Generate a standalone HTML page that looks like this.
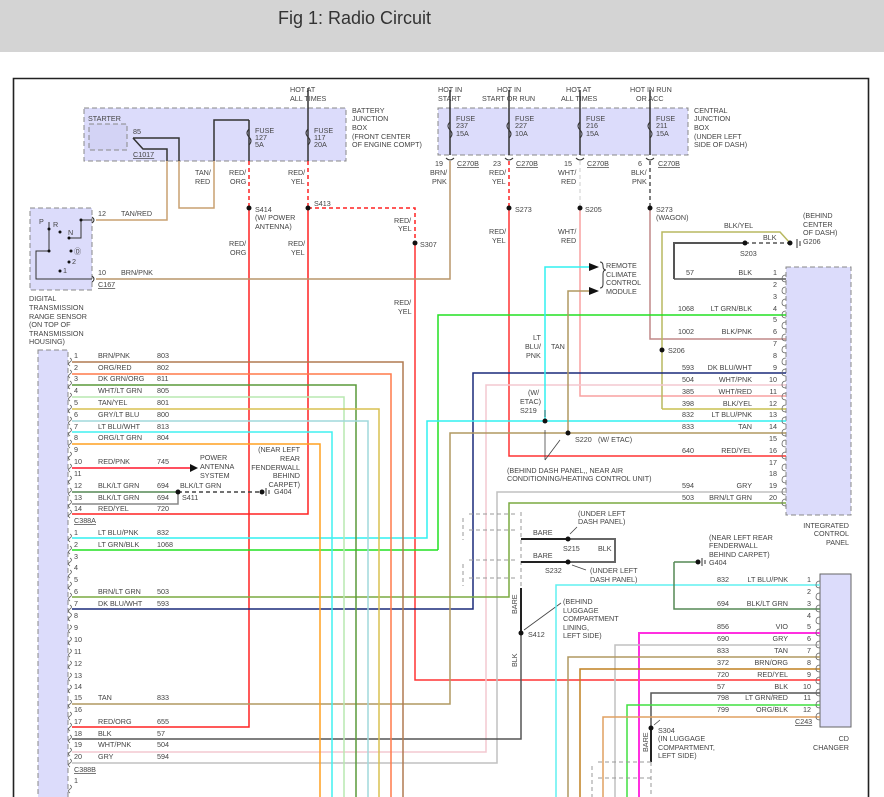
<!DOCTYPE html>
<html><head><meta charset="utf-8"><style>
html,body{margin:0;padding:0;width:884px;height:797px;overflow:hidden;background:#fff}
svg{display:block}
text{font-family:"Liberation Sans",sans-serif;font-size:7.2px;fill:#444}
.t{font-size:18px;fill:#333}
.u{text-decoration:underline}
</style></head><body>
<svg width="884" height="797" viewBox="0 0 884 797" xmlns="http://www.w3.org/2000/svg">
<rect x="0" y="0" width="884" height="52" fill="#d4d4d4"/>
<text class="t" x="278" y="24">Fig 1: Radio Circuit</text>
<path d="M13.5 797V78.5H868.5V797" fill="none" stroke="#222" stroke-width="1.6"/>

<rect x="84" y="108" width="262" height="53" fill="#dcdcfb" stroke="#888" stroke-dasharray="5,3"/>
<rect x="89" y="124" width="38" height="26" fill="#d3d3f5" stroke="#888" stroke-dasharray="5,3"/>
<rect x="438" y="108" width="250" height="47" fill="#dcdcfb" stroke="#888" stroke-dasharray="5,3"/>
<rect x="30" y="208" width="62" height="82" fill="#dcdcfb" stroke="#888" stroke-dasharray="5,3"/>
<rect x="38" y="350" width="30" height="460" fill="#dcdcfb" stroke="#888" stroke-dasharray="5,3"/>
<rect x="786" y="267" width="65" height="248" fill="#dcdcfb" stroke="#888" stroke-dasharray="5,3"/>
<rect x="820" y="574" width="31" height="153" fill="#dcdcfb" stroke="#666"/>

<g fill="none" stroke-width="1.5">
<path d="M308 88V161" stroke="#333"/>
<path d="M308 161V208" stroke="#f22" stroke-dasharray="4,3"/>
<path d="M308 208V514H72" stroke="#f22"/>
<path d="M308 208H415V243" stroke="#f22" stroke-dasharray="4,3"/>
<path d="M415 243V680H820" stroke="#f33"/>
<path d="M249 120V161M249 120H214V161" stroke="#333"/>
<path d="M249 161V208" stroke="#f22" stroke-dasharray="4,3"/>
<path d="M249 208V727H72" stroke="#f22"/>
<path d="M214 161V208H179V161" stroke="#c9a070"/>
<path d="M179 161V138H133" stroke="#333"/>
<path d="M133 138L143 149H167V161" stroke="#333"/>
<path d="M167 161V220H96" stroke="#c9a070"/>
<path d="M96 279H450V161" stroke="#b8956a"/>
<path d="M450 90V155M509 90V155M580 90V155M650 90V155" stroke="#333"/>
<path d="M509 161V208" stroke="#f22" stroke-dasharray="4,3"/>
<path d="M509 208V456H786" stroke="#f33"/>
<path d="M580 161V208" stroke="#ddd" stroke-dasharray="4,3"/>
<path d="M580 208V396H786" stroke="#f8a0a0"/>
<path d="M650 161V208" stroke="#555" stroke-dasharray="4,3"/>
<path d="M650 208V339H786" stroke="#c08888"/>
<path d="M674 279V243H745" stroke="#555" stroke-width="2"/>
<path d="M745 243H790" stroke="#555" stroke-dasharray="4,3"/>
<path d="M674 279H786" stroke="#555"/>
<path d="M662 409V232H780L790 243" stroke="#b8b860"/>
<path d="M662 409H786" stroke="#c8c050"/>
<path d="M438 550V315H786" stroke="#22e022"/>
<path d="M72 550H438" stroke="#22e022"/>
<path d="M72 609H473V373H786" stroke="#1a2a7a"/>
<path d="M72 752H486V385H786" stroke="#f4c8d0"/>
<path d="M72 538H427V421H786" stroke="#30f0f0"/>
<path d="M545 421V267H590" stroke="#30f0f0"/>
<path d="M72 704H450V433H786" stroke="#b09860"/>
<path d="M568 433V291H590" stroke="#b09860"/>
<path d="M72 763H497V492H786" stroke="#c0c0c0"/>
<path d="M72 597H509V503H786" stroke="#7aaa40"/>
<path d="M72 739H521V633" stroke="#555"/>
<path d="M72 362H403V797" stroke="#b07a50"/>
<path d="M72 374H391V797" stroke="#ff7a4a"/>
<path d="M72 385H356V797" stroke="#5a9a3a"/>
<path d="M72 397H344V797" stroke="#b8e8b0"/>
<path d="M72 409H379V797" stroke="#d8c050"/>
<path d="M72 421H368V797" stroke="#a0d8dc"/>
<path d="M72 432H332V797" stroke="#40f0f0"/>
<path d="M72 444H320V797" stroke="#ffa020"/>
<path d="M72 468H190" stroke="#ff5060" stroke-width="2"/>
<path d="M72 492H178" stroke="#558855"/>
<path d="M72 504H178V492" stroke="#888"/>
<path d="M178 492H262" stroke="#444" stroke-dasharray="4,3"/>
<path d="M521 512V588M469 514H515M469 530H515M469 560H515M469 578H515M463 518V540M463 564V586" stroke="#999" stroke-dasharray="4,3" stroke-width="1"/>
<path d="M521 539H568M521 562H568M521 588V633" stroke="#222" stroke-width="2"/>
<path d="M568 539H615V562H568" stroke="#666" stroke-width="2"/>
<path d="M524 630L561 603M570 534L577 527M572 565L586 570M545 417L545 410M545 460L560 440M545 460L545 430M654 725L660 720" stroke="#444" stroke-width="0.8"/>
<path d="M556 797V585H820" stroke="#60f0f0"/>
<path d="M674 562V609H820" stroke="#558855"/>
<path d="M674 562H698" stroke="#558855"/>
<path d="M639 797V633H820" stroke="#ff30e0" stroke-width="2"/>
<path d="M615 797V645H820" stroke="#c0c0c0"/>
<path d="M568 797V657H820" stroke="#b09860"/>
<path d="M580 797V669H820" stroke="#c08020"/>
<path d="M651 728V693H820" stroke="#555"/>
<path d="M627 797V705H820" stroke="#40e040"/>
<path d="M603 797V717H820" stroke="#e0a060"/>
<path d="M651 728V762" stroke="#222" stroke-width="2"/>
<path d="M651 762V797M598 762H651M598 778H651M592 766V797" stroke="#999" stroke-dasharray="4,3" stroke-width="1"/>
</g>
<g fill="none" stroke="#333" stroke-width="1">
<path d="M249 129q-4 4 0 8q4 4 0 8M308 129q-4 4 0 8q4 4 0 8M450 122q-4 4 0 8q4 4 0 8M509 122q-4 4 0 8q4 4 0 8M580 122q-4 4 0 8q4 4 0 8M650 122q-4 4 0 8q4 4 0 8"/>
<path d="M446 158q4 4 8 0M505 158q4 4 8 0M576 158q4 4 8 0M646 158q4 4 8 0M92 217q4 3 0 6M92 276q4 3 0 6"/>
<path d="M600 262q3 0 3 4q0 4 3 4q-3 0-3 4v10q0 4-3 4"/>
<path d="M92 220H81V238H69M49 222V251H36V279H92"/>
<path d="M797 239V248M800 241V246"/><path d="M266 488V496M269 490V494"/><path d="M702 558V566M705 560V564"/>
</g>
<g fill="#111">
<path d="M589 263L599 267L589 271Z M589 287L599 291L589 295Z M190 464L198 468L190 472Z"/>
<circle cx="249" cy="208" r="2.5"/><circle cx="308" cy="208" r="2.5"/><circle cx="415" cy="243" r="2.5"/>
<circle cx="509" cy="208" r="2.5"/><circle cx="580" cy="208" r="2.5"/><circle cx="650" cy="208" r="2.5"/>
<circle cx="745" cy="243" r="2.5"/><circle cx="790" cy="243" r="2.5"/><circle cx="662" cy="350" r="2.5"/>
<circle cx="545" cy="421" r="2.5"/><circle cx="568" cy="433" r="2.5"/><circle cx="178" cy="492" r="2.5"/>
<circle cx="262" cy="492" r="2.5"/><circle cx="568" cy="539" r="2.5"/><circle cx="568" cy="562" r="2.5"/>
<circle cx="521" cy="633" r="2.5"/><circle cx="698" cy="562" r="2.5"/><circle cx="651" cy="728" r="2.5"/>
<circle cx="81" cy="220" r="1.5"/><circle cx="49" cy="229" r="1.5"/><circle cx="60" cy="232" r="1.5"/><circle cx="69" cy="238" r="1.5"/><circle cx="71" cy="251" r="1.5"/><circle cx="49" cy="251" r="1.5"/><circle cx="69" cy="262" r="1.5"/><circle cx="60" cy="271" r="1.5"/>
</g>
<g fill="none" stroke="#666" stroke-width="0.8">
<path d="M70 358q3 2 0 4q-3 2 0 4M70 370q3 2 0 4q-3 2 0 4M70 381q3 2 0 4q-3 2 0 4M70 393q3 2 0 4q-3 2 0 4M70 405q3 2 0 4q-3 2 0 4M70 417q3 2 0 4q-3 2 0 4M70 428q3 2 0 4q-3 2 0 4M70 440q3 2 0 4q-3 2 0 4M70 452q3 2 0 4q-3 2 0 4M70 464q3 2 0 4q-3 2 0 4M70 476q3 2 0 4q-3 2 0 4M70 488q3 2 0 4q-3 2 0 4M70 500q3 2 0 4q-3 2 0 4M70 510q3 2 0 4q-3 2 0 4"/>
<path d="M70 534q3 2 0 4q-3 2 0 4M70 546q3 2 0 4q-3 2 0 4M70 558q3 2 0 4q-3 2 0 4M70 570q3 2 0 4q-3 2 0 4M70 582q3 2 0 4q-3 2 0 4M70 593q3 2 0 4q-3 2 0 4M70 605q3 2 0 4q-3 2 0 4M70 613q3 2 0 4q-3 2 0 4M70 625q3 2 0 4q-3 2 0 4M70 637q3 2 0 4q-3 2 0 4M70 649q3 2 0 4q-3 2 0 4M70 661q3 2 0 4q-3 2 0 4M70 673q3 2 0 4q-3 2 0 4M70 685q3 2 0 4q-3 2 0 4M70 700q3 2 0 4q-3 2 0 4M70 712q3 2 0 4q-3 2 0 4M70 723q3 2 0 4q-3 2 0 4M70 735q3 2 0 4q-3 2 0 4M70 748q3 2 0 4q-3 2 0 4M70 759q3 2 0 4q-3 2 0 4M70 785q3 2 0 4q-3 2 0 4"/>
<path d="M786 275q-4 0-4 4q0 3 4 3M786 287q-4 0-4 4q0 3 4 3M786 299q-4 0-4 4q0 3 4 3M786 311q-4 0-4 4q0 3 4 3M786 322q-4 0-4 4q0 3 4 3M786 334q-4 0-4 4q0 3 4 3M786 346q-4 0-4 4q0 3 4 3M786 358q-4 0-4 4q0 3 4 3M786 369q-4 0-4 4q0 3 4 3M786 381q-4 0-4 4q0 3 4 3M786 393q-4 0-4 4q0 3 4 3M786 405q-4 0-4 4q0 3 4 3M786 417q-4 0-4 4q0 3 4 3M786 429q-4 0-4 4q0 3 4 3M786 440q-4 0-4 4q0 3 4 3M786 452q-4 0-4 4q0 3 4 3M786 464q-4 0-4 4q0 3 4 3M786 476q-4 0-4 4q0 3 4 3M786 488q-4 0-4 4q0 3 4 3M786 499q-4 0-4 4q0 3 4 3"/>
<path d="M820 581q-4 0-4 4q0 3 4 3M820 593q-4 0-4 4q0 3 4 3M820 605q-4 0-4 4q0 3 4 3M820 617q-4 0-4 4q0 3 4 3M820 629q-4 0-4 4q0 3 4 3M820 641q-4 0-4 4q0 3 4 3M820 653q-4 0-4 4q0 3 4 3M820 665q-4 0-4 4q0 3 4 3M820 677q-4 0-4 4q0 3 4 3M820 689q-4 0-4 4q0 3 4 3M820 701q-4 0-4 4q0 3 4 3M820 713q-4 0-4 4q0 3 4 3"/>
</g>

<text x="290" y="92">HOT AT</text><text x="290" y="101">ALL TIMES</text>
<text x="352" y="113">BATTERY</text><text x="352" y="121">JUNCTION</text><text x="352" y="130">BOX</text><text x="352" y="139">(FRONT CENTER</text><text x="352" y="147">OF ENGINE COMPT)</text>
<text x="88" y="121">STARTER</text><text x="133" y="134">85</text><text class="u" x="133" y="157">C1017</text>
<text x="255" y="133">FUSE</text><text x="255" y="140">127</text><text x="255" y="147">5A</text>
<text x="314" y="133">FUSE</text><text x="314" y="140">117</text><text x="314" y="147">20A</text>
<text x="195" y="175">TAN/</text><text x="195" y="184">RED</text>
<text x="229" y="175">RED/</text><text x="230" y="184">ORG</text>
<text x="288" y="175">RED/</text><text x="291" y="184">YEL</text>
<text x="255" y="212">S414</text><text x="255" y="220">(W/ POWER</text><text x="255" y="229">ANTENNA)</text>
<text x="314" y="206">S413</text>
<text x="394" y="223">RED/</text><text x="398" y="231">YEL</text><text x="420" y="247">S307</text>
<text x="229" y="246">RED/</text><text x="230" y="255">ORG</text><text x="288" y="246">RED/</text><text x="291" y="255">YEL</text>
<text x="394" y="305">RED/</text><text x="398" y="314">YEL</text>
<text x="98" y="216">12</text><text x="121" y="216">TAN/RED</text>
<text x="98" y="275">10</text><text x="121" y="275">BRN/PNK</text><text class="u" x="98" y="287">C167</text>
<text x="39" y="224">P</text><text x="53" y="227">R</text><text x="68" y="235">N</text><text x="74" y="254">Ⓓ</text><text x="72" y="264">2</text><text x="63" y="273">1</text>
<text x="29" y="301">DIGITAL</text><text x="29" y="310">TRANSMISSION</text><text x="29" y="319">RANGE SENSOR</text><text x="29" y="327">(ON TOP OF</text><text x="29" y="336">TRANSMISSION</text><text x="29" y="344">HOUSING)</text>

<text x="438" y="92">HOT IN</text><text x="438" y="101">START</text>
<text x="497" y="92">HOT IN</text><text x="482" y="101">START OR RUN</text>
<text x="566" y="92">HOT AT</text><text x="561" y="101">ALL TIMES</text>
<text x="630" y="92">HOT IN RUN</text><text x="636" y="101">OR ACC</text>
<text x="694" y="113">CENTRAL</text><text x="694" y="121">JUNCTION</text><text x="694" y="130">BOX</text><text x="694" y="139">(UNDER LEFT</text><text x="694" y="147">SIDE OF DASH)</text>
<text x="456" y="121">FUSE</text><text x="456" y="128">237</text><text x="456" y="136">15A</text>
<text x="515" y="121">FUSE</text><text x="515" y="128">227</text><text x="515" y="136">10A</text>
<text x="586" y="121">FUSE</text><text x="586" y="128">216</text><text x="586" y="136">15A</text>
<text x="656" y="121">FUSE</text><text x="656" y="128">211</text><text x="656" y="136">15A</text>
<text x="435" y="166">19</text><text class="u" x="457" y="166">C270B</text>
<text x="493" y="166">23</text><text class="u" x="516" y="166">C270B</text>
<text x="564" y="166">15</text><text class="u" x="587" y="166">C270B</text>
<text x="638" y="166">6</text><text class="u" x="658" y="166">C270B</text>
<text x="430" y="175">BRN/</text><text x="432" y="184">PNK</text>
<text x="489" y="175">RED/</text><text x="492" y="184">YEL</text>
<text x="558" y="175">WHT/</text><text x="561" y="184">RED</text>
<text x="631" y="175">BLK/</text><text x="632" y="184">PNK</text>
<text x="515" y="212">S273</text><text x="585" y="212">S205</text><text x="656" y="212">S273</text><text x="656" y="220">(WAGON)</text>
<text x="489" y="234">RED/</text><text x="492" y="243">YEL</text><text x="558" y="234">WHT/</text><text x="561" y="243">RED</text>
<text x="606" y="268">REMOTE</text><text x="606" y="277">CLIMATE</text><text x="606" y="285">CONTROL</text><text x="606" y="294">MODULE</text>
<text x="803" y="218">(BEHIND</text><text x="803" y="227">CENTER</text><text x="803" y="235">OF DASH)</text><text x="803" y="244">G206</text>
<text x="724" y="228">BLK/YEL</text><text x="763" y="240">BLK</text><text x="740" y="256">S203</text>
<text x="533" y="340">LT</text><text x="525" y="349">BLU/</text><text x="526" y="358">PNK</text><text x="551" y="349">TAN</text>
<text x="668" y="353">S206</text>
<text x="528" y="395">(W/</text><text x="520" y="404">ETAC)</text><text x="520" y="413">S219</text>
<text x="575" y="442">S220</text><text x="598" y="442">(W/ ETAC)</text>
<text x="507" y="473">(BEHIND DASH PANEL,, NEAR AIR</text><text x="507" y="481">CONDITIONING/HEATING CONTROL UNIT)</text>

<!-- ICP labels -->
<text x="686" y="275">57</text><text x="678" y="311">1068</text><text x="678" y="334">1002</text>
<text x="682" y="370">593</text><text x="682" y="382">504</text><text x="682" y="394">385</text><text x="682" y="406">398</text><text x="682" y="417">832</text><text x="682" y="429">833</text><text x="682" y="453">640</text><text x="682" y="488">594</text><text x="682" y="500">503</text>
<g text-anchor="end">
<text x="752" y="275">BLK</text><text x="752" y="311">LT GRN/BLK</text><text x="752" y="334">BLK/PNK</text>
<text x="752" y="370">DK BLU/WHT</text><text x="752" y="382">WHT/PNK</text><text x="752" y="394">WHT/RED</text><text x="752" y="406">BLK/YEL</text><text x="752" y="417">LT BLU/PNK</text><text x="752" y="429">TAN</text><text x="752" y="453">RED/YEL</text><text x="752" y="488">GRY</text><text x="752" y="500">BRN/LT GRN</text>
<text x="777" y="275">1</text><text x="777" y="287">2</text><text x="777" y="299">3</text><text x="777" y="311">4</text><text x="777" y="322">5</text><text x="777" y="334">6</text><text x="777" y="346">7</text><text x="777" y="358">8</text><text x="777" y="370">9</text><text x="777" y="382">10</text><text x="777" y="394">11</text><text x="777" y="406">12</text><text x="777" y="417">13</text><text x="777" y="429">14</text><text x="777" y="441">15</text><text x="777" y="453">16</text><text x="777" y="465">17</text><text x="777" y="476">18</text><text x="777" y="488">19</text><text x="777" y="500">20</text>
<text x="849" y="528">INTEGRATED</text><text x="849" y="536">CONTROL</text><text x="849" y="545">PANEL</text>
<text x="300" y="452">(NEAR LEFT</text><text x="300" y="461">REAR</text><text x="300" y="470">FENDERWALL</text><text x="300" y="478">BEHIND</text><text x="300" y="487">CARPET)</text>
</g>
<!-- CD changer labels -->
<text x="717" y="582">832</text><text x="717" y="606">694</text><text x="717" y="629">856</text><text x="717" y="641">690</text><text x="717" y="653">833</text><text x="717" y="665">372</text><text x="717" y="677">720</text><text x="717" y="689">57</text><text x="717" y="700">798</text><text x="717" y="712">799</text>
<g text-anchor="end">
<text x="788" y="582">LT BLU/PNK</text><text x="788" y="606">BLK/LT GRN</text><text x="788" y="629">VIO</text><text x="788" y="641">GRY</text><text x="788" y="653">TAN</text><text x="788" y="665">BRN/ORG</text><text x="788" y="677">RED/YEL</text><text x="788" y="689">BLK</text><text x="788" y="700">LT GRN/RED</text><text x="788" y="712">ORG/BLK</text>
<text x="811" y="582">1</text><text x="811" y="594">2</text><text x="811" y="606">3</text><text x="811" y="618">4</text><text x="811" y="629">5</text><text x="811" y="641">6</text><text x="811" y="653">7</text><text x="811" y="665">8</text><text x="811" y="677">9</text><text x="811" y="689">10</text><text x="811" y="700">11</text><text x="811" y="712">12</text>
<text x="849" y="741">CD</text><text x="849" y="750">CHANGER</text>
</g>
<text class="u" x="795" y="724">C243</text>
<text x="709" y="540">(NEAR LEFT REAR</text><text x="709" y="548">FENDERWALL</text><text x="709" y="557">BEHIND CARPET)</text><text x="709" y="565">G404</text>
<text x="658" y="733">S304</text><text x="658" y="741">(IN LUGGAGE</text><text x="658" y="750">COMPARTMENT,</text><text x="658" y="758">LEFT SIDE)</text>
<text transform="translate(648,752) rotate(-90)">BARE</text>
<!-- middle labels -->
<text x="533" y="535">BARE</text><text x="533" y="558">BARE</text><text x="563" y="551">S215</text><text x="598" y="551">BLK</text><text x="545" y="573">S232</text>
<text x="578" y="516">(UNDER LEFT</text><text x="578" y="524">DASH PANEL)</text>
<text x="590" y="573">(UNDER LEFT</text><text x="590" y="582">DASH PANEL)</text>
<text transform="translate(517,614) rotate(-90)">BARE</text><text transform="translate(517,667) rotate(-90)">BLK</text>
<text x="528" y="637">S412</text>
<text x="563" y="604">(BEHIND</text><text x="563" y="613">LUGGAGE</text><text x="563" y="621">COMPARTMENT</text><text x="563" y="630">LINING,</text><text x="563" y="638">LEFT SIDE)</text>
<text x="200" y="460">POWER</text><text x="200" y="469">ANTENNA</text><text x="200" y="478">SYSTEM</text>
<text x="180" y="488">BLK/LT GRN</text><text x="182" y="500">S411</text><text x="274" y="494">G404</text>
<!-- C388A labels -->
<text x="74" y="358">1</text><text x="98" y="358">BRN/PNK</text><text x="157" y="358">803</text>
<text x="74" y="370">2</text><text x="98" y="370">ORG/RED</text><text x="157" y="370">802</text>
<text x="74" y="381">3</text><text x="98" y="381">DK GRN/ORG</text><text x="157" y="381">811</text>
<text x="74" y="393">4</text><text x="98" y="393">WHT/LT GRN</text><text x="157" y="393">805</text>
<text x="74" y="405">5</text><text x="98" y="405">TAN/YEL</text><text x="157" y="405">801</text>
<text x="74" y="417">6</text><text x="98" y="417">GRY/LT BLU</text><text x="157" y="417">800</text>
<text x="74" y="429">7</text><text x="98" y="429">LT BLU/WHT</text><text x="157" y="429">813</text>
<text x="74" y="440">8</text><text x="98" y="440">ORG/LT GRN</text><text x="157" y="440">804</text>
<text x="74" y="452">9</text>
<text x="74" y="464">10</text><text x="98" y="464">RED/PNK</text><text x="157" y="464">745</text>
<text x="74" y="476">11</text>
<text x="74" y="488">12</text><text x="98" y="488">BLK/LT GRN</text><text x="157" y="488">694</text>
<text x="74" y="500">13</text><text x="98" y="500">BLK/LT GRN</text><text x="157" y="500">694</text>
<text x="74" y="511">14</text><text x="98" y="511">RED/YEL</text><text x="157" y="511">720</text>
<text class="u" x="74" y="523">C388A</text>
<text x="74" y="535">1</text><text x="98" y="535">LT BLU/PNK</text><text x="157" y="535">832</text>
<text x="74" y="547">2</text><text x="98" y="547">LT GRN/BLK</text><text x="157" y="547">1068</text>
<text x="74" y="559">3</text><text x="74" y="570">4</text><text x="74" y="582">5</text>
<text x="74" y="594">6</text><text x="98" y="594">BRN/LT GRN</text><text x="157" y="594">503</text>
<text x="74" y="606">7</text><text x="98" y="606">DK BLU/WHT</text><text x="157" y="606">593</text>
<text x="74" y="618">8</text><text x="74" y="630">9</text><text x="74" y="642">10</text><text x="74" y="654">11</text><text x="74" y="666">12</text><text x="74" y="678">13</text><text x="74" y="689">14</text>
<text x="74" y="700">15</text><text x="98" y="700">TAN</text><text x="157" y="700">833</text>
<text x="74" y="712">16</text>
<text x="74" y="724">17</text><text x="98" y="724">RED/ORG</text><text x="157" y="724">655</text>
<text x="74" y="736">18</text><text x="98" y="736">BLK</text><text x="157" y="736">57</text>
<text x="74" y="747">19</text><text x="98" y="747">WHT/PNK</text><text x="157" y="747">504</text>
<text x="74" y="759">20</text><text x="98" y="759">GRY</text><text x="157" y="759">594</text>
<text class="u" x="74" y="772">C388B</text>
<text x="74" y="783">1</text>
</svg>
</body></html>
